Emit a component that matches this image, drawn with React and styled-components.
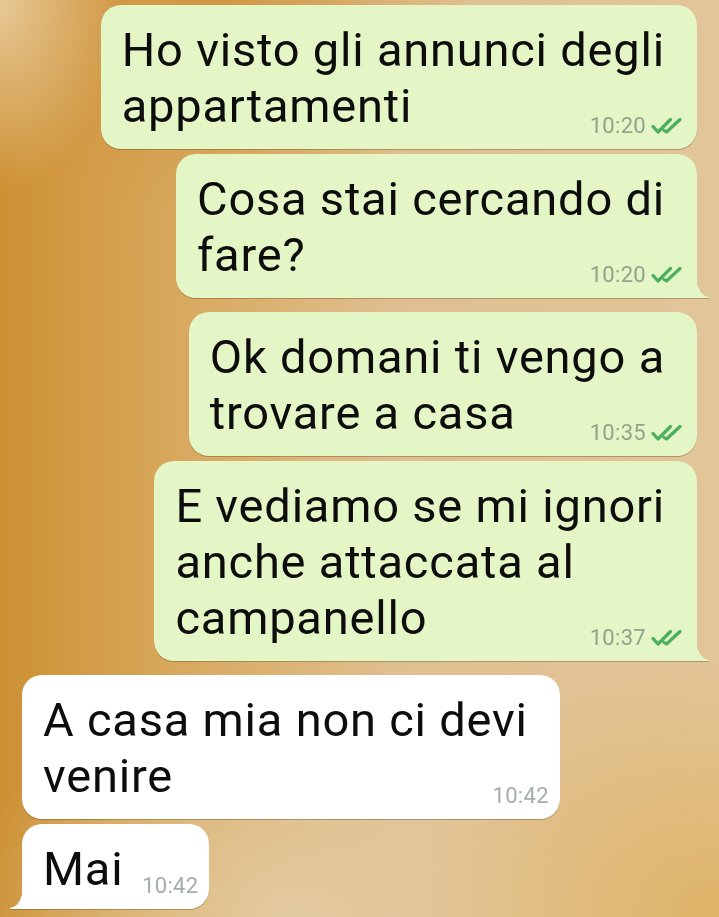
import styled, { createGlobalStyle } from "styled-components";

const GlobalStyle = createGlobalStyle`
  html, body {
    margin: 0;
    padding: 0;
  }

  body {
    font-family: Roboto, "Noto Sans", "Liberation Sans", sans-serif;
    overflow: hidden;
  }
`;

const groups = [
  {
    side: "out",
    messages: [
      { lines: ["Ho visto gli annunci degli", "appartamenti"], time: "10:20" },
      { lines: ["Cosa stai cercando di", "fare?"], time: "10:20" },
    ],
  },
  {
    side: "out",
    messages: [
      { lines: ["Ok domani ti vengo a", "trovare a casa"], time: "10:35" },
      {
        lines: ["E vediamo se mi ignori", "anche attaccata al", "campanello"],
        time: "10:37",
      },
    ],
  },
  {
    side: "in",
    messages: [
      { lines: ["A casa mia non ci devi", "venire"], time: "10:42" },
      { lines: ["Mai"], time: "10:42", short: true },
    ],
  },
];

const DoubleCheck = () => (
  <svg width="35" height="18" viewBox="0 0 35 18" fill="none">
    <path
      d="M3 9.5 L8 15 L20.5 2.5"
      stroke="#4caf5b"
      strokeWidth="3.2"
      strokeLinecap="round"
      strokeLinejoin="round"
    />
    <path
      d="M14 13.5 L16.5 15 L30 2.5"
      stroke="#4caf5b"
      strokeWidth="3.2"
      strokeLinecap="round"
      strokeLinejoin="round"
    />
  </svg>
);

const Message = ({ side, lines, time, short, tail }) => (
  <Bubble $side={side} $tail={tail} $short={short}>
    <Text>
      {lines.map((line) => (
        <div key={line}>{line}</div>
      ))}
    </Text>
    <Meta $side={side}>
      <span>{time}</span>
      {side === "out" && <DoubleCheck />}
    </Meta>
  </Bubble>
);

const App = () => (
  <>
    <GlobalStyle />
    <Chat>
      {groups.map((group, gi) => (
        <Group key={gi} $side={group.side}>
          {group.messages.map((msg, mi) => (
            <Message
              key={mi}
              side={group.side}
              tail={mi === group.messages.length - 1}
              {...msg}
            />
          ))}
        </Group>
      ))}
    </Chat>
  </>
);

export default App;

const Chat = styled.div`
  box-sizing: border-box;
  display: flex;
  flex-direction: column;
  gap: 14px;
  height: 917px;
  padding: 5px 22px 0;
  width: 719px;
  background:
    radial-gradient(ellipse 120px 190px at 0% 0%, rgba(232, 204, 156, 0.95), rgba(232, 204, 156, 0) 100%),
    radial-gradient(ellipse 300px 260px at 100% 100%, rgba(223, 178, 98, 0.9), rgba(223, 178, 98, 0) 100%),
    radial-gradient(ellipse 320px 240px at 40% 100%, rgba(228, 205, 164, 0.9), rgba(228, 205, 164, 0) 100%),
    radial-gradient(ellipse 260px 220px at 30% 0%, rgba(206, 146, 60, 0.8), rgba(206, 146, 60, 0) 100%),
    linear-gradient(90deg, #cd9033 0%, #d7a659 22%, #dfbf8f 55%, #e2c599 100%);
`;

const Group = styled.div`
  align-items: ${({ $side }) => ($side === "out" ? "flex-end" : "flex-start")};
  display: flex;
  flex-direction: column;
  gap: 5px;
`;

const Bubble = styled.div`
  background: ${({ $side }) => ($side === "out" ? "#e4f5c6" : "#ffffff")};
  border-radius: 20px;
  ${({ $tail, $side }) =>
    $tail &&
    ($side === "out"
      ? "border-bottom-right-radius: 0;"
      : "border-bottom-left-radius: 0;")}
  box-sizing: border-box;
  filter: drop-shadow(0 1.5px 0.6px rgba(90, 60, 20, 0.35));
  padding: ${({ $short }) =>
    $short ? "17px 86px 12px 21px" : "17px 32px 15px 21px"};
  position: relative;

  &::after {
    bottom: 0;
    content: "";
    display: ${({ $tail }) => ($tail ? "block" : "none")};
    height: 22px;
    position: absolute;
    width: 13px;
    ${({ $side }) =>
      $side === "out"
        ? `right: -12px;
           background: radial-gradient(ellipse 13px 21px at 100% 0, transparent 97%, #e4f5c6 100%);`
        : `left: -12px;
           background: radial-gradient(ellipse 13px 21px at 0 0, transparent 97%, #ffffff 100%);`}
  }
`;

const Text = styled.div`
  color: #0d0d0d;
  font-size: 47px;
  letter-spacing: 0.8px;
  line-height: 56px;
  white-space: nowrap;
`;

const Meta = styled.div`
  align-items: center;
  bottom: 10px;
  color: ${({ $side }) => ($side === "out" ? "#8fa58b" : "#a3aeac")};
  display: flex;
  font-size: 22px;
  gap: 4px;
  letter-spacing: 0.3px;
  line-height: 26px;
  position: absolute;
  right: ${({ $side }) => ($side === "out" ? "12px" : "11px")};
`;
